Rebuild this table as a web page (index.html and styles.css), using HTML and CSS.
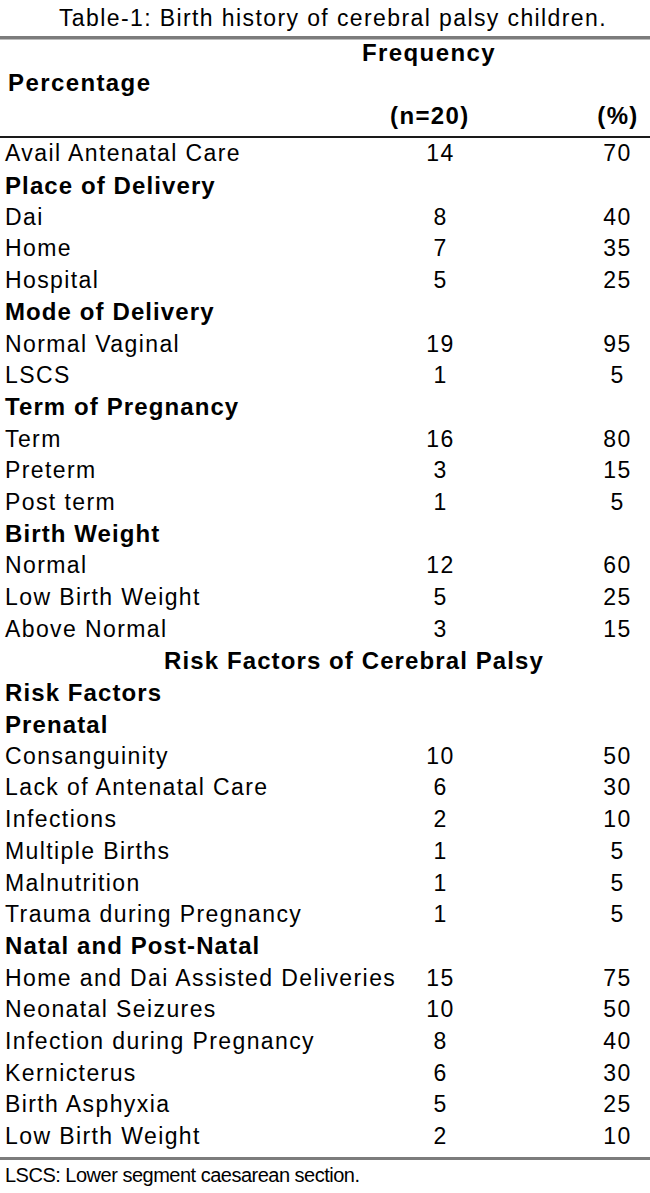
FILE: index.html
```html
<!DOCTYPE html>
<html>
<head>
<meta charset="utf-8">
<link rel="stylesheet" href="styles.css">
</head>
<body>
<div class="page">
  <div class="title">Table-1: Birth history of cerebral palsy children.</div>
  <div class="head">
    <div class="h-freq">Frequency</div>
    <div class="h-pct">Percentage</div>
    <div class="h-n">(n=20)</div>
    <div class="h-p">(%)</div>
  </div>
  <div class="body">
    <div class="row"><span class="lab">Avail Antenatal Care</span><span class="num">14</span><span class="pc">70</span></div>
    <div class="row sec"><span class="lab">Place of Delivery</span></div>
    <div class="row"><span class="lab">Dai</span><span class="num">8</span><span class="pc">40</span></div>
    <div class="row"><span class="lab">Home</span><span class="num">7</span><span class="pc">35</span></div>
    <div class="row"><span class="lab">Hospital</span><span class="num">5</span><span class="pc">25</span></div>
    <div class="row sec"><span class="lab">Mode of Delivery</span></div>
    <div class="row"><span class="lab">Normal Vaginal</span><span class="num">19</span><span class="pc">95</span></div>
    <div class="row"><span class="lab">LSCS</span><span class="num">1</span><span class="pc">5</span></div>
    <div class="row sec"><span class="lab">Term of Pregnancy</span></div>
    <div class="row"><span class="lab">Term</span><span class="num">16</span><span class="pc">80</span></div>
    <div class="row"><span class="lab">Preterm</span><span class="num">3</span><span class="pc">15</span></div>
    <div class="row"><span class="lab">Post term</span><span class="num">1</span><span class="pc">5</span></div>
    <div class="row sec"><span class="lab">Birth Weight</span></div>
    <div class="row"><span class="lab">Normal</span><span class="num">12</span><span class="pc">60</span></div>
    <div class="row"><span class="lab">Low Birth Weight</span><span class="num">5</span><span class="pc">25</span></div>
    <div class="row"><span class="lab">Above Normal</span><span class="num">3</span><span class="pc">15</span></div>
    <div class="row band"><span class="band-t">Risk Factors of Cerebral Palsy</span></div>
    <div class="row sec"><span class="lab">Risk Factors</span></div>
    <div class="row sec"><span class="lab">Prenatal</span></div>
    <div class="row"><span class="lab">Consanguinity</span><span class="num">10</span><span class="pc">50</span></div>
    <div class="row"><span class="lab">Lack of Antenatal Care</span><span class="num">6</span><span class="pc">30</span></div>
    <div class="row"><span class="lab">Infections</span><span class="num">2</span><span class="pc">10</span></div>
    <div class="row"><span class="lab">Multiple Births</span><span class="num">1</span><span class="pc">5</span></div>
    <div class="row"><span class="lab">Malnutrition</span><span class="num">1</span><span class="pc">5</span></div>
    <div class="row"><span class="lab">Trauma during Pregnancy</span><span class="num">1</span><span class="pc">5</span></div>
    <div class="row sec"><span class="lab">Natal and Post-Natal</span></div>
    <div class="row"><span class="lab">Home and Dai Assisted Deliveries</span><span class="num">15</span><span class="pc">75</span></div>
    <div class="row"><span class="lab">Neonatal Seizures</span><span class="num">10</span><span class="pc">50</span></div>
    <div class="row"><span class="lab">Infection during Pregnancy</span><span class="num">8</span><span class="pc">40</span></div>
    <div class="row"><span class="lab">Kernicterus</span><span class="num">6</span><span class="pc">30</span></div>
    <div class="row"><span class="lab">Birth Asphyxia</span><span class="num">5</span><span class="pc">25</span></div>
    <div class="row"><span class="lab">Low Birth Weight</span><span class="num">2</span><span class="pc">10</span></div>
  </div>
  <div class="foot">LSCS: Lower segment caesarean section.</div>
</div>
</body>
</html>
```

FILE: styles.css
```css
html, body {
  margin: 0;
  padding: 0;
  background: #fff;
}
body {
  font-family: "Liberation Sans", Arial, sans-serif;
  color: #000;
}
.page {
  width: 650px;
}
.title {
  height: 36px;
  line-height: 36px;
  font-size: 23px;
  letter-spacing: 1.4px;
  text-align: center;
  padding-left: 16px;
  white-space: nowrap;
}
.head {
  display: grid;
  grid-template-columns: 400px 80px 104px 66px;
  grid-template-rows: 27px 34px 31px;
  padding-bottom: 5px;
  border-top: 3px solid #7c7c7c;
  box-shadow: inset 0 1px 0 #bdbdbd;
  border-bottom: 2px solid #1a1a1a;
  font-weight: bold;
  font-size: 24px;
  letter-spacing: 1.4px;
  white-space: nowrap;
}
.head > div {
  display: flex;
  align-items: center;
}
.h-freq {
  grid-column: 1 / 4;
  grid-row: 1;
  padding-left: 362px;
}
.h-pct {
  grid-column: 1;
  grid-row: 2;
  padding-left: 8px;
}
.h-n {
  grid-column: 1 / 3;
  grid-row: 3;
  padding-left: 390px;
}
.h-p {
  grid-column: 4;
  grid-row: 3;
  justify-content: center;
  padding-left: 2px;
}
.body {
  display: flex;
  flex-direction: column;
  padding-bottom: 4px;
  border-bottom: 3px solid #7c7c7c;
}
.row {
  display: grid;
  grid-template-columns: 400px 80px 104px 66px;
  height: 31.71px;
  align-items: center;
  font-size: 23px;
  letter-spacing: 1.4px;
  white-space: nowrap;
}
.lab {
  grid-column: 1;
  padding-left: 5px;
}
.num {
  grid-column: 2;
  text-align: center;
  padding-left: 1px;
}
.pc {
  grid-column: 4;
  text-align: center;
  padding-left: 1px;
}
.sec {
  font-weight: bold;
  font-size: 24px;
  letter-spacing: 1.1px;
}
.band {
  font-weight: bold;
  font-size: 24px;
  letter-spacing: 1.1px;
}
.band-t {
  grid-column: 1 / -1;
  text-align: center;
  padding-left: 58px;
}
.foot {
  height: 30px;
  line-height: 30px;
  font-size: 20px;
  letter-spacing: -0.5px;
  padding-left: 5px;
  white-space: nowrap;
}
```
